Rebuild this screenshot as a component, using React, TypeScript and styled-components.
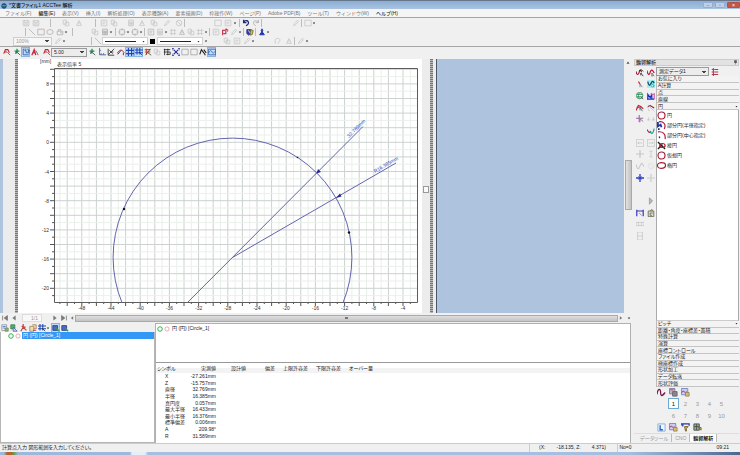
import React from "react";
import styled, { createGlobalStyle } from "styled-components";

const GlobalStyle = createGlobalStyle`
  * { box-sizing: border-box; }
  html, body, #root { height: 100%; }
  body {
    margin: 0;
    background: #f0f0f0;
    color: #222;
    font-family: "Liberation Sans", "Noto Sans CJK JP", sans-serif;
    font-size: 5px;
    line-height: 6px;
    overflow: hidden;
  }
  button, select, input { font: inherit; color: inherit; }
`;

/* ---------- icons ---------- */

const glyphs: Record<string, React.ReactNode> = {
  save: <path d="M1.5 2h7v6.500h-7zM3 2v2.500h4V2M3.500 8.500V6h3v2.500" />,
  box: <path d="M1.500 1.500h7v7h-7zM3 4h4M3 6h3" />,
  square: <path d="M1 1.500h8v7H1z" />,
  docs: <path d="M1.500 1.500h4v5h-4zM4 4h4.500v4.500H4z" />,
  calc: <path d="M2 1.500h6v7H2zM2 4h6M4 4v4.500M6 4v4.500M2 6h6" />,
  net: <path d="M2 8l3-6 3 6M2 8h6M3.500 5h3" />,
  no: <path d="M5 1.500a3.500 3.500 0 100 7 3.500 3.500 0 000-7M2.500 2.500l5 5" />,
  undo: <path strokeWidth="1.6" d="M2 1v3.500h3.500M2 4.500C3.500 1 9 1.500 8 5.500 7.700 7 6 8 5 8.500" />,
  redo: <path d="M8 1v3.500H4.500M8 4.500C6.500 1 1 1.500 2 5.500 2.300 7 4 8 5 8.500" />,
  pen: <path d="M2 8.500l1-3 4-4 1.500 1.500-4 4zM5.500 3L7 4.500" />,
  line: <path d="M1 1l8 8" />,
  ellipse: <ellipse cx="5" cy="5" rx="4" ry="3" />,
  lock: <path d="M1.500 4h7v4.500h-7zM3 4V2h3v2M5 6h3" />,
  target: <path d="M2 2h6v6H2zM5 0v3M5 7v3M0 5h3M7 5h3" />,
  hatch: <path d="M1 3h8M1 7h8M3 1v8M7 1v8" />,
  arc: <path d="M1.500 8.500V4c0-3 6-3 6 0L5 8.500" />,
  redTool: (
    <>
      <path stroke="#c43b52" strokeWidth="1.500" d="M2 9V3h3M6 1v6H3M6 1l3 2" />
      <path stroke="#888" d="M7 5l2-1" />
    </>
  ),
  shield: (
    <>
      <path fill="#2c3fa8" stroke="#26348f" d="M1 2h5v5L3.500 9 1 7z" />
      <path fill="#d9b936" stroke="#6b6b3a" d="M6 2l3 1-1 5-3 1z" />
      <path stroke="#fff" d="M3 3l2 3" />
    </>
  ),
  person: <path fill="#1a2dad" stroke="#1a2dad" d="M5 1l1 2-.5 2L8 8.500H2L4.500 5 4 3z" />,
  zoomR: (
    <>
      <path stroke="#c52233" strokeWidth="1.400" d="M1 7l2-5h3l2 4M2 5h3" />
      <path stroke="#555" d="M5.500 5.500L9 9" />
    </>
  ),
  zoomG: (
    <>
      <path stroke="#18864b" strokeWidth="1.500" d="M2 4h6M5 1v6M3 7l2-3" />
      <path stroke="#444" d="M5.500 5.500L9 9" />
    </>
  ),
  zoomBox: (
    <>
      <path stroke="#2657a5" d="M1.500 1v7.500h7M3 3h2v3h3V2" />
      <path stroke="#333" strokeDasharray="1 1" d="M2 1.500h7V7" />
    </>
  ),
  letterA: (
    <>
      <path stroke="#cc1f38" strokeWidth="1.500" d="M1 9l3-7 2 7M2 6h4" />
      <path stroke="#555" d="M6 3l3 6" />
    </>
  ),
  axis: <path stroke="#33559c" d="M2 0v8.500h8M4 8.500v-2M7 8.500v-2M2 3h1.500" />,
  cursorLine: <path stroke="#222" d="M1.500 1v8H9M2 8l7-7M3 3l4 4M6 5h2" />,
  curve: (
    <>
      <path stroke="#9b2440" strokeWidth="1.200" d="M0 7c3-5 6-6 9-1" />
      <path stroke="#222" d="M1 8l4-5M8 6v3" />
    </>
  ),
  grid: <path stroke="#1d45b8" strokeWidth="1.400" d="M0 3h10M0 7h10M3 0v10M7 0v10" />,
  gridCur: (
    <>
      <path stroke="#1d45b8" strokeWidth="1.300" d="M0 2.500h10M0 6h10M2.500 0v8M6 0v8" />
      <path stroke="#233" d="M5 5l4 4" />
    </>
  ),
  orange: (
    <>
      <path stroke="#b5562b" strokeWidth="1.400" d="M1 2h7M1 5h7M3 1v7" />
      <path stroke="#41372e" d="M8 1L2 9M5 6l4 3" />
    </>
  ),
  hash: <path stroke="#222" d="M2 1v8M6 1v8M1 2h8M1 5h8M4 8h5V5" />,
  cross: (
    <>
      <path stroke="#26269b" strokeWidth="1.300" d="M2 2l6 6M8 2L2 8" />
      <path stroke="#26269b" d="M0 3V.5h2.500M7.500.5H10V3M10 7v2.500H7.500M2.500 9.500H0V7" />
    </>
  ),
  zig: <path stroke="#222" strokeWidth="1.400" d="M1 8l2-6 3 4 2 3M6 2l3 4" />,
  wave: <path stroke="#2e5fa7" d="M.5 1.500h9v7h-9zM1 6c2-4 3-3 4-1s2 2 4-1" />,
  curA: (
    <>
      <path stroke="#a51238" strokeWidth="1.500" d="M0 3c1 5 3 5 4 1s2-3 3 0" />
      <path stroke="#222" d="M4 2l3-1 2 2M6 5l3 4M6 5v3" />
    </>
  ),
  curB: (
    <>
      <path stroke="#bd1538" strokeWidth="1.500" d="M0 2c1 6 3 6 4 2s3-3 5 1" />
      <path stroke="#666" d="M6 5l3 4M6 5v4l2-1" />
    </>
  ),
  dotCur: (
    <>
      <path stroke="#d01b45" strokeWidth="1.500" d="M3 2l2 3" />
      <path stroke="#777" d="M5 5l3 4M5 5v4" />
    </>
  ),
  tealCur: (
    <>
      <path fill="#9df3ee" stroke="none" d="M0 0h10v10H0z" />
      <path stroke="#123c6e" strokeWidth="1.500" d="M1 2c1 5 2 6 4 2s3-2 4 0" />
      <path fill="#d4ffff" stroke="#187979" d="M5 4l4 3-2 2-2-2z" />
    </>
  ),
  globe: (
    <>
      <circle cx="4.500" cy="4.500" r="4" stroke="#258350" />
      <path stroke="#258350" d="M1 3h7M1 6h7M4.500 1c-2 2-2 5 0 7" />
      <path stroke="#444" d="M6 6l3 3" />
    </>
  ),
  blueM: (
    <>
      <path stroke="#192fc0" strokeWidth="1.500" d="M1 9V3l3 4 2-4v6M0 9h9" />
      <path stroke="#b11d7d" d="M4 3c2-3 3 2 5-1v7" />
    </>
  ),
  redPath: (
    <>
      <path stroke="#c51b36" strokeWidth="1.500" d="M0 8l3-6 3 1 3 3" />
      <path stroke="#2b6a6a" d="M1 4l5 1M5 4l3 5M5 4v4" />
    </>
  ),
  dashPath: (
    <>
      <path stroke="#7c2036" strokeWidth="1.300" d="M1 3l3-1 5 3" />
      <path stroke="#c477b2" strokeDasharray="1 1" d="M1 4l2 5M4 4l5 5" />
    </>
  ),
  purpleCross: (
    <>
      <path stroke="#a05dad" strokeWidth="1.300" d="M4 0v9M0 4h9" />
      <path stroke="#777" d="M5 5l4 3M5 5v4" />
    </>
  ),
  redTeal: (
    <>
      <path stroke="#b9193c" strokeWidth="1.400" d="M0 3c2 4 3 5 5 2" />
      <path stroke="#169d9d" strokeWidth="1.400" d="M4 5c1 4 3 5 5-3" />
    </>
  ),
  dash2: <path d="M0 6h4M6 6h4M2 3v4M8 3v4" />,
  left: <path d="M.5.5h9v9h-9zM2 5h6M4 3.500L2.500 5 4 6.500" />,
  right: <path d="M.5.5h9v9h-9zM2 5h6M6 3.500L7.500 5 6 6.500" />,
  plus: <path strokeWidth="1.500" d="M5 0v10M0 5h10" />,
  bluePlus: (
    <>
      <path stroke="#2a3cc0" strokeWidth="1.600" d="M5 0v10M0 5h10" />
      <path stroke="#2a3cc0" d="M3 3l4 4M7 3L3 7" />
    </>
  ),
  beam: <path d="M3 1.500h4M5 1.500v7M3 8.500h4" />,
  sine: <path strokeWidth="1.300" d="M0 3c2 7 3 7 5 2s3-4 5 1" />,
  play: <path fill="#b8b8b8" stroke="#999" d="M3 1l4 4-4 4z" />,
  gauge: (
    <>
      <path stroke="#3535c5" strokeWidth="1.500" d="M1 1v8M9 1v8M1 2.500h8" />
      <path stroke="#777" d="M4 5l3 3" />
    </>
  ),
  sheet: <path fill="#deded0" stroke="#62624e" d="M1.500 2.500h7v7h-7zM4 2.500l2-2 1 2M4 5h3M4 5v3h2" />,
  cells: <path d="M0 3h10v4H0zM3 3v4M7 3v4" />,
  cellsV: <path d="M2 0h6v10H2zM2 5h6" />,
  redRing: <circle cx="5" cy="5" r="3.900" stroke="#aa1c38" strokeWidth="1.300" />,
  thinRed: <circle cx="5" cy="5" r="3.500" stroke="#d97986" />,
  green: <circle cx="5" cy="5" r="3.800" stroke="#24b343" strokeWidth="1.600" />,
  partial: (
    <>
      <path stroke="#aa1c38" strokeWidth="1.300" d="M8 9C11 3 6 0 2 1" />
      <path stroke="#2233a0" strokeWidth="2" d="M1 1v5l3-2 1 3M1 9h2" />
    </>
  ),
  partialDot: (
    <>
      <path stroke="#aa1c38" strokeWidth="1.300" d="M1 1c5-1 9 2 8 8" />
      <path stroke="#222a90" strokeWidth="2" d="M2 7h1.500" />
    </>
  ),
  fish: (
    <>
      <path stroke="#222" strokeWidth="1.500" d="M1 1l8 8M1 9l5-5" />
      <path stroke="#aa1c38" strokeWidth="1.300" d="M3 5c0-3 6-3 6 0s-6 3-6 0" />
    </>
  ),
  redOval: <ellipse cx="5" cy="5" rx="4.500" ry="3.200" stroke="#aa1c38" strokeWidth="1.300" />,
  colorDoc: (
    <>
      <path fill="#fff" stroke="#848a98" d="M1 1h6v7H1z" />
      <path stroke="#4259c2" d="M2 3h4M2 5h3" />
      <path fill="#83b96d" stroke="#7b8c6f" d="M5 5h4v4H5z" />
    </>
  ),
  greenDoc: (
    <>
      <path fill="#57b46a" stroke="#277846" d="M1 1h5v5H1z" />
      <path fill="#d9def9" stroke="#4d5e99" d="M4 4l5 5H4z" />
    </>
  ),
  redX: <path stroke="#bd4238" strokeWidth="1.500" d="M4 0v4L1 9M4 4l4 4M2 3l5 1" />,
  paste: (
    <>
      <path fill="#f0dfb0" stroke="#a97c55" d="M1 3h5v6H1zM4 1h5v5H6" />
      <path stroke="#b92d3c" d="M5 8h4" />
    </>
  ),
  blueDoc: (
    <>
      <path fill="#5367c5" stroke="#243785" d="M1 2h6v6H1z" />
      <path stroke="#2d9c4e" strokeWidth="1.600" d="M5 5l4 4" />
    </>
  ),
  image: (
    <>
      <path fill="#c8cef3" stroke="#7681c0" d="M.5.500h7v7h-7z" />
      <path stroke="#a51238" d="M1 5c2-4 3 2 5-1" />
      <path fill="#dbbd68" stroke="#988562" d="M5 5h4v4H5z" />
    </>
  ),
  imageGray: (
    <>
      <path fill="#b7b3d1" stroke="#82799c" d="M.5.500h6v6h-6z" />
      <path fill="#8b858e" stroke="#6b6370" d="M4 4h5v5H4z" />
      <path stroke="#c94b64" d="M1 2h4" />
    </>
  ),
  loop: <path stroke="#7a1645" strokeWidth="1.400" d="M0 7c1-7 4-7 4-2s3 4 5 0M6 8l3-3" />,
  letterL: (
    <>
      <path fill="#eef6ff" stroke="#7faedc" d="M1 1h8v8H1z" />
      <path stroke="#2462bf" strokeWidth="1.500" d="M3.500 2.500v5h3" />
    </>
  ),
  filter: (
    <>
      <path stroke="#2137b4" strokeWidth="1.400" d="M0 3V1h9v2M2 1v3" />
      <path fill="#d9b34b" stroke="#77602d" d="M4 4h4L6 6v3H5z" />
    </>
  ),
  table: (
    <>
      <path fill="#97a79c" stroke="#47554a" d="M1 1h6v7H1zM1 4h6M4 1v7" />
      <path fill="#c9ad55" stroke="#7b6b36" d="M6 5h3v3z" />
    </>
  ),
  listRed: <path stroke="#b33850" strokeWidth="1.300" d="M1 2h2M4 2h5M1 5h2M4 5h5M1 8h8M3 0v10" />,
  caret: <path fill="#333" stroke="none" d="M3 4h4L5 7z" />,
  first: <path fill="#777" stroke="#777" d="M2 2v6M8 2L4 5l4 3z" />,
  prev: <path fill="#777" stroke="none" d="M7 2L3 5l4 3z" />,
  next: <path fill="#777" stroke="none" d="M3 2l4 3-4 3z" />,
  last: <path fill="#777" stroke="#777" d="M8 2v6M2 2l4 3-4 3z" />,
  up: <path fill="#555" stroke="none" d="M3 6h4L5 3z" />,
  pin: <path fill="#555" stroke="#555" d="M3 1h4v4H3zM2 5h6M5 5v4" />,
  app: (
    <>
      <circle cx="5" cy="5" r="4" fill="#205a86" stroke="#163b5d" />
      <path stroke="#8fd6ea" d="M2 5c2-3 4 2 6-1" />
    </>
  ),
};

const Svg = styled.svg<{ $size: number }>`
  display: block;
  flex: none;
  width: ${(p) => p.$size}px;
  height: ${(p) => p.$size}px;
  fill: none;
  stroke: currentColor;
  stroke-width: 1;
`;

const Icon = ({ name, size = 9 }: { name: string; size?: number }) => (
  <Svg viewBox="0 0 10 10" $size={size} aria-hidden="true">
    {glyphs[name]}
  </Svg>
);

const IconButton = styled.button<{ $tone?: string; $on?: boolean; $w?: number }>`
  display: flex;
  align-items: center;
  justify-content: center;
  flex: none;
  width: ${(p) => p.$w ?? 9}px;
  height: 10px;
  padding: 0;
  border: 0;
  color: ${(p) => p.$tone ?? "#c6c6c6"};
  background: ${(p) => (p.$on ? "#c5ddf7" : "transparent")};
  box-shadow: ${(p) => (p.$on ? "inset 0 0 0 1px #8bb4e0" : "none")};
`;

/* ---------- window frame ---------- */

const Window = styled.div`
  display: flex;
  flex-direction: column;
  height: 100%;
`;

const TitleBar = styled.header`
  display: flex;
  align-items: center;
  gap: 2px;
  height: 9px;
  flex: none;
  padding: 1px 0 0 1px;
  border-top: 1px solid #64778c;
  background: linear-gradient(#8cadd1, #a9c3e2);
`;

const Title = styled.h1`
  flex: 1;
  margin: 0;
  font-size: 5px;
  line-height: 7px;
  font-weight: 500;
  color: #111;
  font-feature-settings: "palt";
`;

const CaptionButton = styled.button<{ $close?: boolean }>`
  display: grid;
  place-items: center;
  width: ${(p) => (p.$close ? 13 : 10)}px;
  height: 6px;
  padding: 0;
  margin-bottom: 1px;
  font-size: 5px;
  line-height: 5px;
  border: 1px solid ${(p) => (p.$close ? "#a6564e" : "#96add0")};
  border-radius: 1px;
  color: ${(p) => (p.$close ? "#fff" : "#5d7596")};
  background: ${(p) => (p.$close ? "#c95546" : "#bdd0e8")};
`;

const MenuBar = styled.nav`
  display: flex;
  align-items: center;
  gap: 7px;
  flex: none;
  height: 9px;
  padding-left: 5px;
  background: #f5f5f5;
  border-bottom: 1px solid #a5a5a5;
`;

const MenuItem = styled.button<{ $strong?: boolean }>`
  padding: 0;
  border: 0;
  background: none;
  white-space: nowrap;
  color: ${(p) => (p.$strong ? "#222" : "#777")};
  font-weight: ${(p) => (p.$strong ? 500 : 400)};
`;

const ToolArea = styled.div`
  flex: none;
  padding-bottom: 1px;
  border-bottom: 1px solid #a5a5a5;
`;

const ToolRow = styled.div`
  display: flex;
  align-items: center;
  height: 9px;
  padding-top: 1px;
`;

const ViewBar = styled.div`
  display: flex;
  align-items: center;
  flex: none;
  height: 12px;
  padding: 0 0 2px 2px;
`;

const Gap = styled.span<{ $w: number }>`
  flex: none;
  width: ${(p) => p.$w}px;
`;

const Rule = styled.span`
  flex: none;
  width: 1px;
  height: 8px;
  margin: 0 1px;
  background: #bcbcbc;
`;

const Combo = styled.select<{ $w: number; $pale?: boolean }>`
  flex: none;
  width: ${(p) => p.$w}px;
  height: 9px;
  padding: 0 2px;
  appearance: none;
  border: 1px solid ${(p) => (p.$pale ? "#cfcfcf" : "#9a9a9a")};
  border-radius: 0;
  color: ${(p) => (p.$pale ? "#999" : "#222")};
  line-height: 7px;
  background: linear-gradient(45deg, transparent 50%, #444 50%) right 4px center / 2px 2px no-repeat,
    linear-gradient(-45deg, transparent 50%, #444 50%) right 2px center / 2px 2px no-repeat,
    ${(p) => (p.$pale ? "#f6f6f6" : "#ececec")};
`;

const LinePicker = styled.button`
  display: flex;
  align-items: center;
  gap: 5px;
  flex: none;
  width: 46px;
  height: 8px;
  padding: 0 1px 0 2px;
  border: 1px solid #d2d2d2;
  background: #fff;
  &::before {
    content: "";
    flex: 1;
    height: 1px;
    background: #222;
  }
`;

const Swatch = styled.button`
  flex: none;
  width: 5px;
  height: 5px;
  padding: 0;
  border: 0;
  background: #000;
`;

/* A number is blank space, "|" a divider, "name:#color" an icon, a trailing "!" a pressed icon. */
type Token = number | string;

const Tools = ({ items }: { items: Token[] }) => (
  <>
    {items.map((t, i) => {
      if (typeof t === "number") return <Gap key={i} $w={t} />;
      if (t === "|") return <Rule key={i} />;
      const on = t.endsWith("!");
      const [name, tone] = t.replace("!", "").split(":");
      const isCaret = name === "caret";
      return (
        <IconButton key={i} $tone={tone} $on={on} $w={isCaret ? 4 : 9} aria-label={name}>
          <Icon name={name} size={isCaret ? 6 : 8} />
        </IconButton>
      );
    })}
  </>
);

const row1: Token[] = [
  21, "save", 1, "save", 9, "|", 9, "docs", 4, "net", 11, "|", 2, "box", 1, "docs", 8, "calc", 2, "net", 3, "docs",
  4, "pen", 3, "no", "|", 27, "square", 1, "box", 1, "caret", 1, "|", "undo:#1b2c78", 1, "redo:#aaaaaa", "|", 28,
  "pen", "|", "square", "caret",
];
const row2: Token[] = [
  24, "|", "line:#b0b0b0", "square:#b0b0b0", "ellipse:#b0b0b0", 1, "lock:#b0b0b0", "caret", 3, "|", 16, "docs", 1,
  "calc:#aaaaaa", "caret", 1, "|", "target:#b5b5b5", "caret", "target:#b5b5b5", "caret", "|", "box:#b5b5b5",
  "calc", "caret", "hatch", "net:#b5b5b5", "docs", "hatch", "caret", "|", "box", "redTool", "pen", "caret",
  "|", "shield", "|", "person", "caret",
];
const viewLeft: Token[] = ["zoomR", 1, "zoomG", "zoomBox!", "letterA", 3, "zoomR"];
const viewRight: Token[] = [
  "zoomG", 1, "axis", "cursorLine", 1, "curve", "grid!", "gridCur!", "orange", "docs", 1, "hash", "cross",
  "square:#a5a5a5", "square:#a5a5a5", "zig", "wave!",
];

const menus = [
  "ファイル(F)", "編集(E)", "表示(V)", "挿入(I)", "解析処理(O)", "表示種類(A)", "要素描画(D)", "枠操作(W)",
  "ページ(P)", "Adobe PDF(B)", "ツール(T)", "ウィンドウ(W)", "ヘルプ(H)",
];

/* ---------- drawing sheet ---------- */

const Workspace = styled.main`
  display: grid;
  grid-template-columns: 1fr 108px;
  flex: 1;
  min-height: 0;
`;

const Left = styled.div`
  display: flex;
  flex-direction: column;
  min-width: 0;
  min-height: 0;
`;

const SheetRow = styled.div`
  display: flex;
  flex: 1;
  min-height: 0;
  overflow: hidden;
`;

const Desk = styled.div`
  display: flex;
  flex: 1;
  min-width: 0;
  padding-left: 3px;
  background: #aec3dd;
`;

const Page = styled.div`
  display: flex;
  overflow: hidden;
  background: #fff;
  border-right: 1px solid #4b5869;
`;

const Margin = styled.div<{ $w: number }>`
  width: ${(p) => p.$w}px;
  background: #ececec;
`;

const Perforation = styled.div`
  width: 3px;
  background: repeating-linear-gradient(#777 0 1px, #b8b8b8 1px 2px);
`;

const Handle = styled.div`
  display: flex;
  align-items: center;
  width: 8px;
  background: #ececec;
  &::before {
    content: "";
    width: 5px;
    height: 5px;
    margin: 6px 1px 0;
    border: 1px solid #999;
    background: #fafafa;
  }
`;

const ChartSvg = styled.svg`
  display: block;
  flex: none;
  width: 404px;
  height: 254px;
  text {
    font-family: "Liberation Sans", "Noto Sans CJK JP", sans-serif;
    font-size: 5px;
    fill: #333;
  }
`;

const DimensionText = styled.text`
  && { fill: #4040b0; }
`;

const PX = 7.3;
const xOf = (mm: number) => 227.8 + (mm + 28) * PX;
const yOf = (mm: number) => 142.3 - mm * PX;
const range = (from: number, to: number) => Array.from({ length: to - from + 1 }, (_, i) => from + i);

const Chart = () => {
  const xs = range(-51, -3);
  const ys = range(-21, 10);
  return (
    <ChartSvg viewBox="18 59 404 254" role="img" aria-label="円の測定プロット">
      <defs>
        <clipPath id="plot">
          <rect x="54" y="68" width="364" height="235" />
        </clipPath>
      </defs>
      <g fill="none">
        {xs.map((v) => (
          <path key={v} d={`M${xOf(v)} 68V302`} stroke={v % 2 ? "#e9f0e9" : "#cbd2cf"} strokeWidth="1" />
        ))}
        {ys.map((v) => (
          <path key={v} d={`M54 ${yOf(v)}H417`} stroke={v % 2 ? "#e9f0e9" : "#cbd2cf"} strokeWidth="1" />
        ))}
        {xs.map((v) => (
          <path key={v} d={`M${xOf(v)} 302v${v % 2 ? 2 : 4}`} stroke="#555" />
        ))}
        {ys.map((v) => (
          <path key={v} d={`M54 ${yOf(v)}h${v % 2 ? -2 : -4}`} stroke="#555" />
        ))}
        <path d="M54.500 68.500H417.500V302.500H54.500z" stroke="#5c5c5c" />
      </g>
      {ys.filter((v) => v % 4 === 0).map((v) => (
        <text key={v} x="49" y={yOf(v) + 2} textAnchor="end">{v}</text>
      ))}
      {xs.filter((v) => v % 4 === 0).map((v) => (
        <text key={v} x={xOf(v)} y="310" textAnchor="middle">{v}</text>
      ))}
      <text x="40" y="63">[mm]</text>
      <text x="57" y="66">表示倍率 5</text>
      <g clipPath="url(#plot)" fill="none" stroke="#6464ae" strokeWidth="1">
        <circle cx="232.500" cy="257.500" r="119.400" />
        <path d="M180 310L363 126.500M232.500 257.500L396 163" />
      </g>
      <path fill="#2525a0" d="M316.500 173.500l1.500-4.500 3 3zM336 198l4-4.500 1.500 3z" />
      <g fill="#111">
        <circle cx="124" cy="209" r="1.200" />
        <circle cx="349" cy="232.500" r="1.200" />
        <circle cx="297.500" cy="157.500" r=".8" />
      </g>
      <DimensionText transform="translate(349 138) rotate(-45)">32.769mm</DimensionText>
      <DimensionText transform="translate(375 173) rotate(-30)">R16.385mm</DimensionText>
    </ChartSvg>
  );
};

const VScroll = styled.div`
  display: flex;
  flex-direction: column;
  align-items: center;
  width: 8px;
  background: #f0f0f0;
  color: #555;
`;

const VThumb = styled.div`
  width: 7px;
  height: 50px;
  margin: 93px 0 0;
  border: 1px solid #aaa;
  background: linear-gradient(90deg, #e2e2e2, #c2c2c2);
`;

const HScroll = styled.div`
  display: flex;
  align-items: center;
  flex: none;
  height: 10px;
  background: #f0f0f0;
`;

const PageInput = styled.input`
  width: 20px;
  height: 8px;
  margin: 0 8px 0 4px;
  padding: 0 3px;
  text-align: right;
  color: #999;
  border: 1px solid #ddd;
  background: #f8f8f8;
`;

const HThumb = styled.div`
  display: grid;
  place-items: center;
  flex: 1;
  height: 7px;
  border: 1px solid #aaa;
  background: linear-gradient(#dedede, #c4c4c4);
  &::before {
    content: "";
    width: 3px;
    height: 2px;
    background: #777;
  }
`;

/* ---------- results ---------- */

const Lower = styled.section`
  display: grid;
  grid-template-columns: 155px 1fr;
  flex: none;
  height: 120px;
`;

const TreePane = styled.div`
  display: flex;
  flex-direction: column;
`;

const Tree = styled.div`
  flex: 1;
  padding-left: 7px;
  border: 1px solid #b5b5b5;
  border-top: 0;
  background: #fff;
`;

const TreeRow = styled.div`
  display: flex;
  align-items: center;
  gap: 1px;
  height: 7px;
`;

const TreeLabel = styled.span<{ $selected?: boolean }>`
  flex: 1;
  padding: 0 1px;
  line-height: 7px;
  white-space: nowrap;
  color: ${(p) => (p.$selected ? "#fff" : "#222")};
  background: ${(p) => (p.$selected ? "#3397f5" : "transparent")};
`;

const Results = styled.div`
  display: flex;
  flex-direction: column;
  margin-right: 1px;
  border: 1px solid #b0b0b0;
  border-bottom: 0;
  background: #fff;
`;

const Summary = styled.div`
  height: 39px;
  padding: 1px;
  border-bottom: 1px solid #999;
`;

const DataTable = styled.table`
  width: 217px;
  height: 76px;
  border-collapse: collapse;
  table-layout: fixed;
  font-feature-settings: "palt";
  th, td {
    padding: 0;
    text-align: right;
    font-weight: 400;
    white-space: nowrap;
    line-height: 6px;
  }
`;

const HeadBand = styled.div`
  background: linear-gradient(#fff 0 5px, #f3f3f3 5px 10px, #fff 10px);
`;

const HeadRow = styled.tr`
  height: 10px;
`;

const Sym = styled.th`
  && {
    text-align: left;
    padding-left: 9px;
  }
`;

const FirstHead = styled.th`
  && {
    text-align: left;
    padding-left: 1px;
  }
`;

const data: [string, string][] = [
  ["X", "-27.261mm"], ["Z", "-15.757mm"], ["直径", "32.769mm"], ["半径", "16.385mm"], ["真円度", "0.057mm"],
  ["最大半径", "16.433mm"], ["最小半径", "16.376mm"], ["標準偏差", "0.006mm"], ["A", "209.98°"], ["R", "31.589mm"],
];

/* ---------- side panel ---------- */

const Side = styled.aside`
  display: flex;
  flex-direction: column;
  min-width: 0;
  padding: 0 1px 1px 2px;
  font-feature-settings: "palt";
`;

const SideHead = styled.div`
  display: flex;
  align-items: center;
  justify-content: space-between;
  flex: none;
  height: 7px;
  margin-bottom: 1px;
  padding-left: 1px;
  border: 1px solid #ccc;
  background: #e2e2e2;
  font-weight: 500;
  line-height: 5px;
`;

const SideBody = styled.div`
  display: grid;
  grid-template-columns: 22px 1fr;
  flex: 1;
  min-height: 0;
`;

const Palette = styled.div`
  display: grid;
  grid-template-columns: 11px 11px;
  grid-auto-rows: 11px 12px 12px;
  align-content: start;
  justify-items: center;
  align-items: center;
`;

const Column = styled.div`
  display: flex;
  flex-direction: column;
  min-width: 0;
  min-height: 0;
`;

const DataRow = styled.div`
  display: flex;
  align-items: center;
  gap: 1px;
  height: 9px;
`;

const Group = styled.div`
  display: grid;
  grid-auto-rows: 1fr;
  flex: none;
  border-left: 1px solid #bbb;
`;

const TopGroup = styled(Group)`
  height: 34px;
`;

const BottomGroup = styled(Group)`
  height: 66px;
`;

const Fold = styled.button`
  display: flex;
  align-items: center;
  justify-content: space-between;
  min-height: 0;
  padding: 0 0 0 1px;
  border: 0;
  border-bottom: 1px solid #c4c4c4;
  background: #f3f3f3;
  text-align: left;
  white-space: nowrap;
  line-height: 5px;
`;

const ShapeList = styled.div`
  flex: 1;
  min-height: 0;
  border: 1px solid #aaa;
  border-top: 0;
  border-bottom-color: #ccc;
  background: #fff;
`;

const Shape = styled.button`
  display: flex;
  align-items: center;
  gap: 1px;
  width: 100%;
  height: 10px;
  padding: 0;
  border: 0;
  background: none;
`;

const IconStrip = styled.div`
  display: flex;
  align-items: center;
  gap: 3px;
  flex: none;
  height: 11px;
  padding-left: 1px;
`;

const Numbers = styled.div`
  display: grid;
  grid-template-columns: repeat(5, 11px);
  grid-auto-rows: 12px;
  flex: none;
  gap: 0 1px;
  padding-left: 12px;
`;

const NumberButton = styled.button<{ $on?: boolean }>`
  height: 11px;
  padding: 0;
  font-size: 6px;
  border: 1px solid ${(p) => (p.$on ? "#6fa9cf" : "transparent")};
  color: ${(p) => (p.$on ? "#111" : "#999")};
  background: ${(p) => (p.$on ? "#fff" : "none")};
`;

const Tabs = styled.div`
  display: flex;
  flex: none;
  height: 9px;
  padding-left: 3px;
  border-top: 1px solid #ddd;
`;

const Tab = styled.button<{ $on?: boolean }>`
  padding: 0 3px;
  border: solid #bbb;
  border-width: 0 1px 0 0;
  line-height: 7px;
  white-space: nowrap;
  font-weight: ${(p) => (p.$on ? 700 : 400)};
  color: ${(p) => (p.$on ? "#111" : "#999")};
  background: ${(p) => (p.$on ? "#fff" : "none")};
`;

const palette: (string | null)[] = [
  "curA", "curB", "dotCur", "tealCur", "globe", "blueM", "redPath", "dashPath", "purpleCross", "dash2", null,
  "redTeal", "left", "right", "plus", "beam", "sine", "no:#e0e0e0", "bluePlus", "plus:#cccccc", null, null, null,
  "play", "gauge", "sheet", "cells", null, "cellsV", null,
];

const shapes: [string, string][] = [
  ["redRing", "円"], ["partial", "部分円(半径指定)"], ["partialDot", "部分円(中心指定)"], ["fish", "接円"],
  ["redRing", "仮想円"], ["redOval", "楕円"],
];

const folds = [
  "ピッチ", "距離・角度・座標差・面積", "特殊計算", "演算", "座標コントロール", "ファイル作成", "極座標作成",
  "形状加工", "データ転送", "形状評価",
];

/* ---------- footer ---------- */

const StatusBar = styled.footer`
  display: grid;
  grid-template-columns: 1fr 88px 15px 108px;
  align-items: start;
  flex: none;
  height: 9px;
  padding-left: 2px;
  border-top: 1px solid #ccc;
  line-height: 7px;
  font-feature-settings: "palt";
`;

const Cell = styled.span`
  height: 8px;
  border-left: 1px solid #ccc;
  white-space: pre;
`;

const Coordinates = styled(Cell)`
  display: flex;
  justify-content: space-between;
  padding: 0 11px 0 9px;
`;

const Clock = styled.time`
  padding-right: 11px;
  text-align: right;
`;

const TaskBar = styled.div`
  flex: none;
  height: 3px;
  background: linear-gradient(90deg, #9cb8da 0 4px, #b0622f 7px 11px, #6a9b55 14px, #9cb8da 18px 130px, #e6eefa 132px 145px, #a6bfe0 148px 85%, #4b678c);
`;

export default function App() {
  return (
    <Window>
      <GlobalStyle />
      <TitleBar>
        <Icon name="app" size={6} />
        <Title>*文書ファイル1 ACCTee 解析</Title>
        <CaptionButton aria-label="最小化">–</CaptionButton>
        <CaptionButton aria-label="元に戻す">▫</CaptionButton>
        <CaptionButton $close aria-label="閉じる">×</CaptionButton>
      </TitleBar>
      <MenuBar>
        {menus.map((m, i) => (
          <MenuItem key={m} $strong={i === 1 || i === menus.length - 1}>{m}</MenuItem>
        ))}
      </MenuBar>
      <ToolArea>
        <ToolRow><Tools items={row1} /></ToolRow>
        <ToolRow><Tools items={row2} /></ToolRow>
        <ToolRow>
          <Gap $w={13} />
          <Combo $w={39} $pale aria-label="ズーム"><option>100%</option></Combo>
          <Tools items={[1, "pen", "caret", 24, "|", "line:#b0b0b0"]} />
          <LinePicker aria-label="線種"><Icon name="caret" size={5} /></LinePicker>
          <Gap $w={2} />
          <Swatch aria-label="色" />
          <Gap $w={2} />
          <LinePicker aria-label="線幅"><Icon name="caret" size={5} /></LinePicker>
          <Tools items={[1, "caret", 14, "docs", 1, "box", 1, "pen", "caret", 18, "arc", 2, "net", "|", "pen", "caret"]} />
        </ToolRow>
      </ToolArea>
      <ViewBar>
        <Tools items={viewLeft} />
        <Combo $w={36} aria-label="表示倍率"><option>5.00</option></Combo>
        <Tools items={viewRight} />
      </ViewBar>

      <Workspace>
        <Left>
          <SheetRow>
            <Desk>
              <Page>
                <Margin $w={12} />
                <Perforation />
                <Chart />
                <Handle />
                <Perforation />
                <Margin $w={3} />
              </Page>
            </Desk>
            <VScroll>
              <Icon name="up" size={8} />
              <VThumb />
            </VScroll>
          </SheetRow>
          <HScroll>
            <Tools items={["first:#777777", "prev:#777777"]} />
            <PageInput aria-label="ページ" defaultValue="1/1" />
            <Tools items={["next:#777777", "last:#777777", 1]} />
            <Icon name="prev" size={6} />
            <HThumb />
            <Icon name="next" size={6} />
            <Gap $w={2} />
            <Icon name="caret" size={6} />
          </HScroll>
          <Lower>
            <TreePane>
              <ToolRow>
                <Tools items={["colorDoc", "greenDoc", 1, "redX", "paste", "gridCur", "caret", 1, "blueDoc!", "blueDoc"]} />
              </ToolRow>
              <Tree>
                <TreeRow>
                  <Icon name="green" size={6} />
                  <Icon name="thinRed" size={6} />
                  <TreeLabel $selected>円 (円) [Circle_1]</TreeLabel>
                </TreeRow>
              </Tree>
            </TreePane>
            <Results>
              <Summary>
                <TreeRow>
                  <Icon name="green" size={6} />
                  <Icon name="thinRed" size={6} />
                  <TreeLabel>円 (円) [Circle_1]</TreeLabel>
                </TreeRow>
              </Summary>
              <HeadBand>
                <DataTable>
                  <colgroup>
                    {[30, 30, 30, 29, 33, 33, 32].map((w, i) => <col key={i} width={w} />)}
                  </colgroup>
                  <thead>
                    <HeadRow>
                      <FirstHead scope="col">シンボル</FirstHead>
                      {["実測値", "設計値", "偏差", "上限許容差", "下限許容差", "オーバー量"].map((h) => (
                        <th key={h} scope="col">{h}</th>
                      ))}
                    </HeadRow>
                  </thead>
                  <tbody>
                    {data.map(([k, v]) => (
                      <tr key={k}>
                        <Sym scope="row">{k}</Sym>
                        <td>{v}</td>
                        <td colSpan={5} />
                      </tr>
                    ))}
                  </tbody>
                </DataTable>
              </HeadBand>
            </Results>
          </Lower>
        </Left>

        <Side>
          <SideHead>輪郭解析<Icon name="pin" size={5} /></SideHead>
          <SideBody>
            <Palette>
              {palette.map((p, i) => (p ? <Tools key={i} items={[p]} /> : <span key={i} />))}
            </Palette>
            <Column>
              <DataRow>
                <Combo $w={53} aria-label="測定データ"><option>測定データ1</option></Combo>
                <IconButton aria-label="一覧"><Icon name="listRed" size={8} /></IconButton>
              </DataRow>
              <TopGroup>
                {["お気に入り", "A計算", "点", "直線"].map((t) => <Fold key={t}>{t}</Fold>)}
                <Fold>円<Icon name="caret" size={5} /></Fold>
              </TopGroup>
              <ShapeList>
                {shapes.map(([icon, label]) => (
                  <Shape key={label}><Icon name={icon} />{label}</Shape>
                ))}
              </ShapeList>
              <BottomGroup>
                {folds.map((f, i) => (
                  <Fold key={f}>{f}{i === 0 && <Icon name="caret" size={5} />}</Fold>
                ))}
              </BottomGroup>
              <IconStrip>
                {["loop", "imageGray", "image"].map((n) => (
                  <IconButton key={n} aria-label={n}><Icon name={n} /></IconButton>
                ))}
              </IconStrip>
              <Numbers>
                {range(1, 10).map((n) => <NumberButton key={n} $on={n === 1}>{n}</NumberButton>)}
              </Numbers>
              <IconStrip>
                {["letterL", "image", "filter", "table"].map((n) => (
                  <IconButton key={n} aria-label={n}><Icon name={n} /></IconButton>
                ))}
              </IconStrip>
            </Column>
          </SideBody>
          <Tabs>
            <Tab>データツール</Tab>
            <Tab>CNO</Tab>
            <Tab $on>輪郭解析</Tab>
          </Tabs>
        </Side>
      </Workspace>

      <StatusBar>
        <span>計算点入力 図形範囲を入力してください。</span>
        <Coordinates><span>(X:</span><span>-18.135, Z:</span><span>4.371)</span></Coordinates>
        <Cell> No=0</Cell>
        <Clock>09:21</Clock>
      </StatusBar>
      <TaskBar />
    </Window>
  );
}
